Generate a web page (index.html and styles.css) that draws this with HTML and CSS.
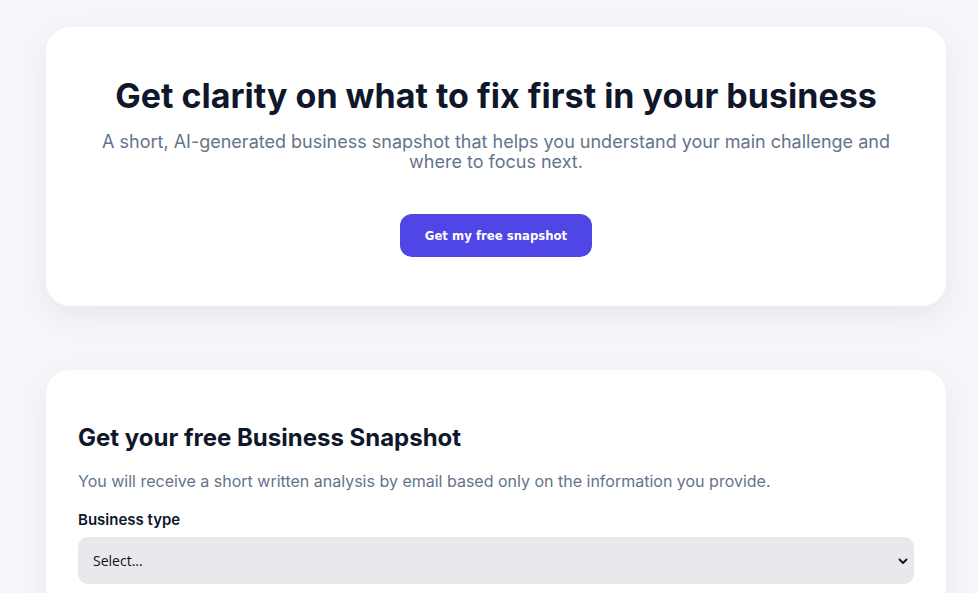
FILE: index.html
```html
<!DOCTYPE html>
<html lang="en">
<head>
<meta charset="utf-8">
<title>Business Snapshot</title>
<link rel="stylesheet" href="styles.css">
</head>
<body>
<main class="page">
  <section class="card hero">
    <h1 class="hero-title">Get clarity on what to fix first in your business</h1>
    <p class="hero-sub">A short, AI-generated business snapshot that helps you understand your main challenge and where to focus next.</p>
    <button class="cta" type="button">Get my free snapshot</button>
  </section>
  <section class="card form-card">
    <h2 class="form-title">Get your free Business Snapshot</h2>
    <p class="form-sub">You will receive a short written analysis by email based only on the information you provide.</p>
    <label class="field-label" for="btype">Business type</label>
    <div class="select-wrap">
      <select id="btype" class="select">
        <option>Select...</option>
      </select>
      <svg class="chev" width="10" height="7" viewBox="0 0 10 7"><path d="M1.5 1.5 L5 5 L8.5 1.5" fill="none" stroke="#111" stroke-width="1.8" stroke-linecap="round" stroke-linejoin="round"/></svg>
    </div>
  </section>
</main>
</body>
</html>
```
FILE: styles.css
```css
* { box-sizing: border-box; }
html, body { margin: 0; padding: 0; }
body {
  background: #f5f6fa;
  font-family: Inter, "Noto Sans", sans-serif;
  color: #0f172a;
}
.page {
  width: 900px;
  margin-left: 46px;
  padding-top: 27px;
  display: flex;
  flex-direction: column;
  gap: 64px;
}
.card {
  background: #fff;
  border-radius: 24px;
  box-shadow: 0 10px 30px rgba(15, 23, 42, 0.06);
}
.hero {
  padding: 47px 40px 49px;
  text-align: center;
  display: flex;
  flex-direction: column;
  align-items: center;
}
.hero-title {
  margin: 0;
  font-size: 34px;
  line-height: 44px;
  font-weight: 700;
  color: #0f172a;
}
.hero-sub {
  margin: 14px 0 0;
  font-size: 18px;
  line-height: 20px;
  color: #64748b;
  max-width: 800px;
}
.cta {
  margin-top: 42px;
  width: 192px;
  height: 43px;
  border: none;
  border-radius: 12px;
  background: #4f46e5;
  color: #fff;
  font-family: "DejaVu Sans Condensed", "DejaVu Sans", Verdana, sans-serif;
  font-stretch: condensed;
  font-weight: 700;
  font-size: 13px;
  cursor: pointer;
}
.form-card {
  padding: 53px 32px 32px;
}
.form-title {
  margin: 0;
  font-size: 24px;
  line-height: 30px;
  font-weight: 700;
  color: #0f172a;
}
.form-sub {
  margin: 17px 0 0;
  font-size: 16px;
  line-height: 22px;
  color: #64748b;
}
.field-label {
  display: block;
  margin-top: 18px;
  font-size: 15px;
  line-height: 20px;
  font-weight: 600;
  color: #0f172a;
}
.select-wrap {
  position: relative;
  margin-top: 7px;
  width: 836px;
}
.select {
  width: 100%;
  height: 47px;
  border: none;
  border-radius: 10px;
  background: #e8e8ed;
  padding: 0 15px;
  font-family: "Open Sans", "Noto Sans", sans-serif;
  font-size: 14px;
  color: #111;
  appearance: none;
  -webkit-appearance: none;
}
.chev {
  position: absolute;
  right: 6px;
  top: 21px;
  pointer-events: none;
}
```
